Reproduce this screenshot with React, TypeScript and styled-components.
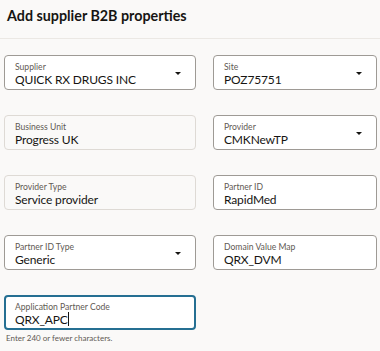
import styled, { createGlobalStyle } from "styled-components";

const GlobalStyle = createGlobalStyle`
  html, body {
    margin: 0;
    padding: 0;
    background: #faf9f8;
  }
  body {
    font-family: Lato, "Noto Sans", sans-serif;
    color: #161513;
  }
`;

const Page = styled.div`
  width: 380px;
  height: 351px;
  overflow: hidden;
  background: #faf9f8;
`;

const Header = styled.div`
  height: 39px;
  box-sizing: border-box;
  padding: 7px 0 0 7px;
  border-bottom: 1px solid #ebe8e4;
`;

const Title = styled.h1`
  margin: 0;
  font-size: 14.3px;
  font-weight: 700;
  line-height: 18px;
  color: #161513;
`;

const Form = styled.div`
  display: grid;
  grid-template-columns: 192px 164px;
  column-gap: 17px;
  row-gap: 25px;
  padding: 16px 0 0 4px;
`;

const Field = styled.div<{ $readOnly?: boolean; $focused?: boolean }>`
  position: relative;
  height: 35px;
  box-sizing: border-box;
  border-radius: 4px;
  padding: ${(p) => (p.$focused ? "5px 28px 0 9px" : "6px 28px 0 10px")};
  background: ${(p) => (p.$readOnly ? "transparent" : "#ffffff")};
  border: ${(p) =>
    p.$focused
      ? "2px solid #256f92"
      : p.$readOnly
      ? "1px solid #dedad5"
      : "1px solid #9e9a95"};
`;

const Label = styled.div`
  font-size: 8.6px;
  line-height: 10px;
  color: #5f5a54;
`;

const Value = styled.div`
  font-size: 12px;
  line-height: 15px;
  letter-spacing: -0.15px;
  color: #161513;
  white-space: nowrap;
`;

const Caret = styled.span`
  position: absolute;
  right: 14px;
  top: 16px;
  width: 0;
  height: 0;
  border-left: 3.5px solid transparent;
  border-right: 3.5px solid transparent;
  border-top: 3.5px solid #161513;
`;

const Cursor = styled.span`
  display: inline-block;
  width: 1px;
  height: 14px;
  background: #161513;
  vertical-align: -2px;
`;

const Help = styled.div`
  margin-top: 3px;
  padding-left: 2px;
  font-size: 8px;
  color: #5f5a54;
`;

type Item = { label: string; value: string; select?: boolean; readOnly?: boolean };

const items: Item[] = [
  { label: "Supplier", value: "QUICK RX DRUGS INC", select: true },
  { label: "Site", value: "POZ75751", select: true },
  { label: "Business Unit", value: "Progress UK", readOnly: true },
  { label: "Provider", value: "CMKNewTP", select: true },
  { label: "Provider Type", value: "Service provider", readOnly: true },
  { label: "Partner ID", value: "RapidMed" },
  { label: "Partner ID Type", value: "Generic", select: true },
  { label: "Domain Value Map", value: "QRX_DVM" },
];

export default function App() {
  return (
    <Page>
      <GlobalStyle />
      <Header>
        <Title>Add supplier B2B properties</Title>
      </Header>
      <Form>
        {items.map((it) => (
          <Field key={it.label} $readOnly={it.readOnly}>
            <Label>{it.label}</Label>
            <Value>{it.value}</Value>
            {it.select && <Caret />}
          </Field>
        ))}
        <div>
          <Field $focused>
            <Label>Application Partner Code</Label>
            <Value>
              QRX_APC
              <Cursor />
            </Value>
          </Field>
          <Help>Enter 240 or fewer characters.</Help>
        </div>
      </Form>
    </Page>
  );
}
